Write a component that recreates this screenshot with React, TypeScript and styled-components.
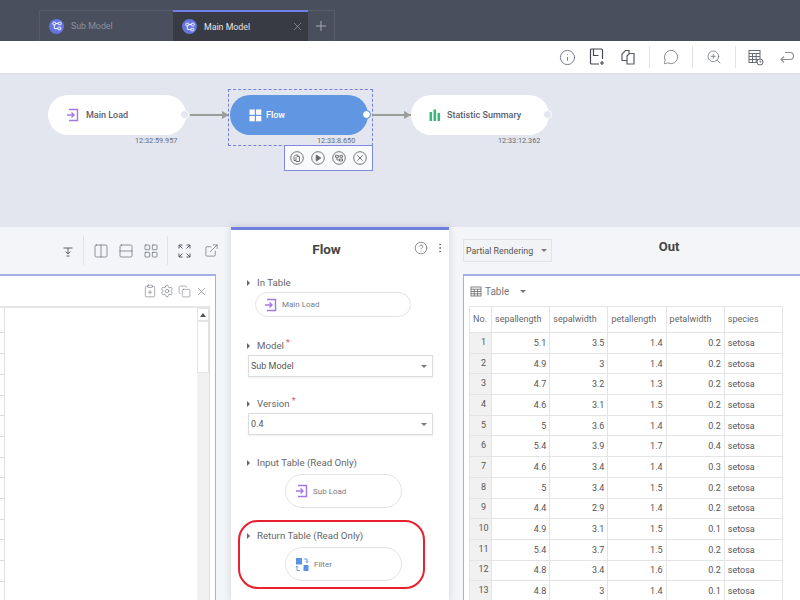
import React from "react";
import styled, { createGlobalStyle } from "styled-components";
import {
  Info,
  MessageCircle,
  ZoomIn,
  Columns2,
  Rows2,
  LayoutGrid,
  ExternalLink,
  ClipboardPlus,
  Settings,
  Copy,
  X,
  CircleHelp,
  EllipsisVertical,
  Plus,
} from "lucide-react";

const GlobalStyle = createGlobalStyle`
  html, body { margin: 0; padding: 0; background: #fff; }
  body { font-family: Roboto, "Liberation Sans", sans-serif; color: #555; }
  * { box-sizing: border-box; }
`;

const Page = styled.div`
  width: 800px;
  height: 600px;
  overflow: hidden;
  display: flex;
  flex-direction: column;
`;

/* top tabs */
const TabBar = styled.div`
  height: 41px;
  flex: none;
  background: #4a4f5e;
  padding: 10px 0 0 39px;
  display: flex;
`;

const Tab = styled.div<{ $active?: boolean }>`
  width: ${(p) => (p.$active ? 135 : 134)}px;
  display: flex;
  align-items: center;
  gap: 7px;
  padding-left: 9px;
  font-size: 8.8px;
  color: ${(p) => (p.$active ? "#e4e5ea" : "#8b8f9a")};
  background: ${(p) => (p.$active ? "#383a44" : "transparent")};
  border-top: ${(p) => (p.$active ? "2px solid #6f80e6" : "1px solid #565b69")};
  border-left: ${(p) => (p.$active ? "none" : "1px solid #565b69")};
`;

const TabBadge = styled.span`
  width: 15px;
  height: 15px;
  border-radius: 50%;
  background: #6474e0;
  display: flex;
  align-items: center;
  justify-content: center;
  flex: none;
`;

const TabClose = styled.span`
  margin-left: auto;
  margin-right: 4px;
  display: flex;
  color: #a9abb3;
`;

const AddTab = styled.div`
  width: 27px;
  display: flex;
  align-items: center;
  justify-content: center;
  color: #b4b7c0;
  border-top: 1px solid #565b69;
  border-right: 1px solid #565b69;
`;

/* main toolbar */
const ToolBar = styled.div`
  height: 33px;
  flex: none;
  background: #fff;
  border-bottom: 1px solid #dcdde2;
  display: flex;
  align-items: center;
  justify-content: flex-end;
  padding-right: 3px;
  color: #555a66;
`;

const ToolBtn = styled.span<{ $w?: number }>`
  width: ${(p) => p.$w ?? 31}px;
  display: flex;
  justify-content: center;
  align-items: center;
`;

const VLine = styled.span<{ $h?: number }>`
  width: 1px;
  height: ${(p) => p.$h ?? 22}px;
  background: #e2e3e8;
  flex: none;
`;

/* flow canvas */
const Canvas = styled.div`
  height: 153px;
  flex: none;
  background: #e3e6ef;
  position: relative;
`;

const Node = styled.div<{ $x: number; $active?: boolean }>`
  position: absolute;
  left: ${(p) => p.$x}px;
  top: 21px;
  width: 138px;
  height: 40px;
  border-radius: 20px;
  background: ${(p) => (p.$active ? "#6096e2" : "#fff")};
  color: ${(p) => (p.$active ? "#fff" : "#5a6070")};
  font-size: 9px;
  font-weight: 500;
  display: flex;
  align-items: center;
  gap: ${(p) => (p.$active ? 4 : 6)}px;
  padding-left: ${(p) => (p.$active ? 19 : 18)}px;
`;

const Port = styled.span<{ $active?: boolean }>`
  position: absolute;
  right: -3px;
  top: 15px;
  width: 9px;
  height: 9px;
  border-radius: 50%;
  background: ${(p) => (p.$active ? "#fff" : "#e3e6ef")};
  border: 1px solid ${(p) => (p.$active ? "#4f86d6" : "#fff")};
`;

const Stamp = styled.span<{ $x: number }>`
  position: absolute;
  left: ${(p) => p.$x}px;
  top: 62px;
  font-size: 7.3px;
  color: #666b76;
`;

const Link = styled.div<{ $x: number; $w: number }>`
  position: absolute;
  left: ${(p) => p.$x}px;
  top: 40px;
  width: ${(p) => p.$w}px;
  height: 2px;
  background: #9a9d9c;
  &::after {
    content: "";
    position: absolute;
    right: 0;
    top: -3px;
    border-left: 7px solid #9a9d9c;
    border-top: 4px solid transparent;
    border-bottom: 4px solid transparent;
  }
`;

const Selection = styled.div`
  position: absolute;
  left: 228px;
  top: 15px;
  width: 145px;
  height: 57px;
  border: 1px dashed #7680e0;
`;

const NodeActions = styled.div`
  position: absolute;
  left: 284px;
  top: 71px;
  width: 89px;
  height: 26px;
  background: #f9fafc;
  border: 1px solid #7f88e2;
  display: flex;
  align-items: center;
  justify-content: space-around;
  padding: 0 2px;
  color: #666;
`;

/* lower area */
const Lower = styled.div`
  flex: 1;
  min-height: 0;
  display: flex;
  background: #f4f5f8;
`;

const LeftPane = styled.div`
  width: 231px;
  flex: none;
  display: flex;
  flex-direction: column;
  padding-right: 15px;
`;

const PaneTools = styled.div`
  height: 47px;
  flex: none;
  display: flex;
  align-items: center;
  justify-content: flex-end;
  margin-right: -5px;
  color: #5c606b;
`;

const LeftCard = styled.div`
  flex: 1;
  background: #fff;
  border-top: 2px solid #a7ade9;
  border-right: 1px solid #a7ade9;
  display: flex;
  flex-direction: column;
  padding-right: 5px;
`;

const CardTools = styled.div`
  height: 30px;
  flex: none;
  display: flex;
  align-items: center;
  justify-content: flex-end;
  color: #6a6e78;
`;

const Grid = styled.div`
  flex: 1;
  display: flex;
  border-top: 2px solid #e6e6e6;
  border-right: 1px solid #dcdcdc;
`;

const RowHeads = styled.div`
  width: 5px;
  flex: none;
  border-right: 1px solid #e0e0e0;
`;

const RowHead = styled.div<{ $h: number }>`
  height: ${(p) => p.$h}px;
  border-bottom: 1px solid #dcdcdc;
`;

const GridBody = styled.div`
  flex: 1;
`;

const ScrollTrack = styled.div`
  width: 12px;
  flex: none;
  background: #f1f1f1;
  display: flex;
  flex-direction: column;
`;

const ScrollUp = styled.div`
  height: 13px;
  background: #fff;
  border: 1px solid #e4e4e4;
  display: flex;
  align-items: center;
  justify-content: center;
  &::before {
    content: "";
    border-bottom: 4px solid #555;
    border-left: 3px solid transparent;
    border-right: 3px solid transparent;
  }
`;

const ScrollThumb = styled.div`
  height: 52px;
  background: #fff;
  border: 1px solid #e4e4e4;
`;

/* settings column */
const FlowPane = styled.div`
  width: 218px;
  flex: none;
  background: #fff;
  border-top: 3px solid #6f7fdc;
  box-shadow: 0 0 7px rgba(120, 125, 145, 0.3);
  padding: 0 16px 0 17px;
  display: flex;
  flex-direction: column;
  position: relative;
`;

const PaneTitle = styled.div`
  height: 38px;
  flex: none;
  display: flex;
  align-items: center;
  justify-content: center;
  padding-right: 28px;
  font-size: 13.5px;
  font-weight: 700;
  color: #444;
  position: relative;
`;

const TitleIcons = styled.span`
  position: absolute;
  right: -13px;
  top: 11px;
  display: flex;
  gap: 6px;
  align-items: center;
  color: #555;
`;

const Label = styled.div<{ $top?: number }>`
  display: flex;
  align-items: center;
  font-size: 9.7px;
  color: #666;
  height: 14px;
  margin-top: ${(p) => p.$top ?? 0}px;
  &::before {
    content: "";
    margin: 1px 7px 0 -1px;
    border-left: 3px solid #666;
    border-top: 3px solid transparent;
    border-bottom: 3px solid transparent;
  }
`;

const Star = styled.span`
  color: #e9565c;
  font-size: 9px;
  margin: -5px 0 0 2px;
`;

const Pill = styled.div<{ $wide?: boolean }>`
  height: ${(p) => (p.$wide ? 25 : 34)}px;
  width: ${(p) => (p.$wide ? 156 : 117)}px;
  margin-left: ${(p) => (p.$wide ? 7 : 37)}px;
  margin-top: ${(p) => (p.$wide ? 3 : 5)}px;
  border: 1px solid #e3e3e3;
  border-radius: 17px;
  background: #fff;
  display: flex;
  align-items: center;
  gap: 4px;
  padding-left: ${(p) => (p.$wide ? 8 : 9)}px;
  font-size: 8px;
  color: #777b85;
`;

const Select = styled.div`
  height: 22px;
  margin-top: 3px;
  border: 1px solid #dcdcdc;
  box-shadow: 0 1px 2px rgba(0, 0, 0, 0.06);
  display: flex;
  align-items: center;
  justify-content: space-between;
  padding: 0 5px 0 2px;
  font-size: 9px;
  color: #555;
`;

const Caret = styled.span<{ $gap?: number }>`
  margin-left: ${(p) => p.$gap ?? 0}px;
  border-top: 3px solid #777;
  border-left: 3px solid transparent;
  border-right: 3px solid transparent;
`;

const ReturnBox = styled.div`
  margin: 12px 0 0 -10px;
  width: 187px;
  height: 69px;
  border: 2px solid #e8202f;
  border-radius: 20px;
  padding: 6px 0 0 8px;
`;

/* output */
const OutPane = styled.div`
  flex: 1;
  min-width: 0;
  padding: 12px 0 0 14px;
  display: flex;
  flex-direction: column;
`;

const OutHead = styled.div`
  height: 35px;
  flex: none;
  display: flex;
  align-items: flex-start;
  position: relative;
`;

const RenderSelect = styled.div`
  width: 89px;
  height: 23px;
  background: #f2f3f5;
  border: 1px solid #e2e3e6;
  display: flex;
  align-items: center;
  justify-content: space-between;
  padding: 0 4px 0 2px;
  font-size: 8.8px;
  white-space: nowrap;
  color: #555;
`;

const OutTitle = styled.div`
  flex: 1;
  text-align: center;
  font-size: 13px;
  font-weight: 700;
  color: #444;
  padding: 0 14px 0 0;
`;

const OutCard = styled.div`
  flex: 1;
  background: #fff;
  border-top: 2px solid #a7ade9;
  border-left: 1px solid #a7ade9;
  padding-left: 5px;
  display: flex;
  flex-direction: column;
`;

const TableBar = styled.div`
  height: 30px;
  flex: none;
  display: flex;
  align-items: center;
  gap: 3px;
  font-size: 10px;
  color: #777;
  padding-left: 1px;
`;

const DataTable = styled.table`
  border-collapse: collapse;
  table-layout: fixed;
  width: 314px;
  font-size: 9px;
  color: #555;
`;

const Th = styled.th<{ $w: number }>`
  width: ${(p) => p.$w}px;
  height: 26px;
  border: 1px solid #e4e4e4;
  font-weight: 400;
  text-align: left;
  padding: 0 3px 1px;
  color: #666;
`;

const NumHead = styled.td`
  height: 20.7px;
  background: #f1f1f1;
  border: 1px solid #e4e4e4;
  text-align: center;
  padding: 0 0 2px 6px;
`;

const Td = styled.td<{ $left?: boolean }>`
  height: 20.7px;
  border: 1px solid #e4e4e4;
  padding: 0 3px;
  text-align: ${(p) => (p.$left ? "left" : "right")};
`;

function ModelIcon({ size = 11, color = "#fff" }: { size?: number; color?: string }) {
  return (
    <svg width={size} height={size} viewBox="0 0 12 12" fill="none" stroke={color} strokeWidth="1.1">
      <rect x="1" y="1.5" width="3.6" height="3" rx="0.8" />
      <rect x="7.4" y="1.5" width="3.6" height="3" rx="0.8" />
      <rect x="7" y="7.5" width="3.6" height="3" rx="0.8" />
      <path d="M4.6 3h2.8M2.8 4.5V9H7" />
    </svg>
  );
}

function LoadIcon() {
  return (
    <svg width="14" height="14" viewBox="0 0 14 14" fill="none" stroke="#a178e6" strokeWidth="1.4">
      <path d="M3 1.5h8.5v11H3" />
      <path d="M1 7h7M5.5 4.5 8 7 5.5 9.5" />
    </svg>
  );
}

function SaveIcon() {
  return (
    <svg width="16" height="18" viewBox="0 0 16 18" fill="none" stroke="#444952" strokeWidth="1.2">
      <path d="M10 16H2.5a1 1 0 0 1-1-1V2a1 1 0 0 1 1-1h10a1 1 0 0 1 1 1v9" />
      <path d="M4.5 1v6.5h5" />
      <path d="M13 13v4M11 15h4" />
    </svg>
  );
}

function PagesIcon({ size = 16 }: { size?: number }) {
  return (
    <svg width={size} height={size} viewBox="0 0 16 16" fill="none" stroke="currentColor" strokeWidth="1.2">
      <path d="M7 11.5H2V5l3.5-3.5H9v3" />
      <path d="M7 7l2.5-2.5H14V15H7z" />
    </svg>
  );
}

function CalendarClock() {
  return (
    <svg width="16" height="17" viewBox="0 0 16 17" fill="none" stroke="#666b76" strokeWidth="1">
      <rect x="1" y="1.5" width="11" height="12" />
      <path d="M1 4.5h11M1 7.5h11M1 10.5h11M4.5 4.5v9M8.2 4.5v9" />
      <circle cx="12" cy="13" r="3" fill="#fff" />
      <path d="M12 11.5V13h1.3" />
    </svg>
  );
}

function UndoArrow() {
  return (
    <svg width="15" height="13" viewBox="0 0 15 13" fill="none" stroke="#8a8e98" strokeWidth="1.1">
      <path d="M6 1.5h5a3.5 3.5 0 0 1 0 7H2M5 5.5l-3 3 3 3" />
    </svg>
  );
}

function DownloadMark() {
  return (
    <svg width="12" height="12" viewBox="0 0 12 12" fill="none" stroke="#555" strokeWidth="0.9">
      <path d="M1.5 3h9M6 3v6M3.5 6.5 6 9l2.5-2.5M4.5 11h3" />
    </svg>
  );
}

function ExpandMark() {
  return (
    <svg width="13" height="14" viewBox="0 0 13 14" fill="none" stroke="#555a66" strokeWidth="1">
      <path d="M1 4.5V1h3.5M12 4.5V1H8.5M1 9.5V13h3.5M12 9.5V13H8.5M1 1l3.5 3.5M12 1 8.5 4.5M1 13l3.5-3.5M12 13 8.5 9.5" />
    </svg>
  );
}

function CircleAction({ children }: { children: React.ReactNode }) {
  return (
    <svg width="14" height="14" viewBox="0 0 14 14" fill="none" stroke="#666" strokeWidth="0.9">
      <circle cx="7" cy="7" r="6.3" />
      {children}
    </svg>
  );
}

function GridTiles() {
  return (
    <svg width="13" height="13" viewBox="0 0 13 13" fill="#fff">
      <rect x="0.5" y="0.5" width="5.3" height="5.3" />
      <rect x="7" y="0.5" width="5.3" height="5.3" />
      <rect x="0.5" y="7" width="5.3" height="5.3" />
      <rect x="7" y="7" width="5.3" height="5.3" />
    </svg>
  );
}

function BarsIcon() {
  return (
    <svg width="12" height="12" viewBox="0 0 12 12" fill="#3cb878">
      <rect x="0.5" y="3" width="2.6" height="9" />
      <rect x="4.5" y="0.5" width="2.6" height="11.5" />
      <rect x="8.5" y="4" width="2.6" height="8" />
    </svg>
  );
}

function FilterIcon() {
  return (
    <svg width="15" height="15" viewBox="0 0 15 15" fill="none">
      <rect x="1" y="1" width="6" height="6.5" fill="#5b93e2" />
      <rect x="8.5" y="8" width="5" height="6" fill="#5b93e2" />
      <path d="M9 2h3v3.5M10.8 4.4 12 5.8l1.2-1.4M2 9.5v4h3M3.2 10.4 2 9l-1.2 1.4" stroke="#5b93e2" strokeWidth="0.9" />
    </svg>
  );
}

function TableGlyph() {
  return (
    <svg width="12" height="11" viewBox="0 0 12 11" fill="none" stroke="#777" strokeWidth="0.9">
      <rect x="1" y="1" width="10" height="9" />
      <path d="M1 3.2h10M1 5.5h10M1 7.8h10M4.3 3.2V10M7.6 3.2V10" />
    </svg>
  );
}

const irisRows = [
  [5.1, 3.5, 1.4, 0.2],
  [4.9, 3, 1.4, 0.2],
  [4.7, 3.2, 1.3, 0.2],
  [4.6, 3.1, 1.5, 0.2],
  [5, 3.6, 1.4, 0.2],
  [5.4, 3.9, 1.7, 0.4],
  [4.6, 3.4, 1.4, 0.3],
  [5, 3.4, 1.5, 0.2],
  [4.4, 2.9, 1.4, 0.2],
  [4.9, 3.1, 1.5, 0.1],
  [5.4, 3.7, 1.5, 0.2],
  [4.8, 3.4, 1.6, 0.2],
  [4.8, 3, 1.4, 0.1],
];

const columns = ["sepallength", "sepalwidth", "petallength", "petalwidth", "species"];

const leftRowHeights = [25, 21, 21, 21, 20, 21, 21, 20, 21, 21, 20, 21, 21, 21];

export default function App() {
  return (
    <Page>
      <GlobalStyle />
      <TabBar>
        <Tab>
          <TabBadge>
            <ModelIcon size={10} />
          </TabBadge>
          Sub Model
        </Tab>
        <Tab $active>
          <TabBadge>
            <ModelIcon size={10} />
          </TabBadge>
          Main Model
          <TabClose>
            <X size={13} strokeWidth={1.1} />
          </TabClose>
        </Tab>
        <AddTab>
          <Plus size={16} strokeWidth={1.3} />
        </AddTab>
      </TabBar>

      <ToolBar>
        <ToolBtn $w={40}><Info size={17} strokeWidth={1.1} /></ToolBtn>
        <ToolBtn $w={20}><SaveIcon /></ToolBtn>
        <ToolBtn $w={42}><PagesIcon /></ToolBtn>
        <VLine />
        <ToolBtn $w={42}><MessageCircle size={16} strokeWidth={1} /></ToolBtn>
        <VLine />
        <ToolBtn $w={42}><ZoomIn size={16} strokeWidth={1} /></ToolBtn>
        <VLine />
        <ToolBtn $w={39}><CalendarClock /></ToolBtn>
        <ToolBtn $w={22}><UndoArrow /></ToolBtn>
      </ToolBar>

      <Canvas>
        <Node $x={48}>
          <LoadIcon />
          Main Load
          <Port />
        </Node>
        <Stamp $x={135}>12:32:59.957</Stamp>
        <Link $x={190} $w={39} />
        <Selection />
        <Node $x={230} $active>
          <GridTiles />
          Flow
          <Port $active />
        </Node>
        <Stamp $x={317}>12:33:8.650</Stamp>
        <Link $x={372} $w={39} />
        <Node $x={411}>
          <BarsIcon />
          Statistic Summary
          <Port />
        </Node>
        <Stamp $x={498}>12:33:12.362</Stamp>
        <NodeActions>
          <CircleAction>
            <path d="M6 9.5H4V5.5L5.5 4H8v1.5M6 6.5l1-1h2.5V10.5H6z" />
          </CircleAction>
          <CircleAction>
            <path d="M5.2 4v6L9.8 7z" fill="#666" />
          </CircleAction>
          <CircleAction>
            <path d="M3.5 4.3h3v2h-3zM8 4.3h2.5v2H8zM7.5 8h3v2h-3zM5 6.3V9h2.5" />
          </CircleAction>
          <CircleAction>
            <path d="M4.3 4.3l5.4 5.4M9.7 4.3l-5.4 5.4" />
          </CircleAction>
        </NodeActions>
      </Canvas>

      <Lower>
        <LeftPane>
          <PaneTools>
            <ToolBtn $w={20}><DownloadMark /></ToolBtn>
            <ToolBtn $w={5} />
            <VLine $h={29} />
            <ToolBtn $w={33}><Columns2 size={16} strokeWidth={1} /></ToolBtn>
            <ToolBtn $w={17}><Rows2 size={16} strokeWidth={1} /></ToolBtn>
            <ToolBtn $w={33}><LayoutGrid size={16} strokeWidth={1} /></ToolBtn>
            <VLine $h={29} />
            <ToolBtn $w={33}><ExpandMark /></ToolBtn>
            <ToolBtn $w={20}><ExternalLink size={15} strokeWidth={1} /></ToolBtn>
          </PaneTools>
          <LeftCard>
            <CardTools>
              <ToolBtn $w={17}><ClipboardPlus size={14} strokeWidth={1} /></ToolBtn>
              <ToolBtn $w={17}><Settings size={14} strokeWidth={1} /></ToolBtn>
              <ToolBtn $w={18}><Copy size={13} strokeWidth={1} /></ToolBtn>
              <ToolBtn $w={17}><X size={13} strokeWidth={1} /></ToolBtn>
            </CardTools>
            <Grid>
              <RowHeads>
                {leftRowHeights.map((h, i) => (
                  <RowHead key={i} $h={h} />
                ))}
              </RowHeads>
              <GridBody />
              <ScrollTrack>
                <ScrollUp />
                <ScrollThumb />
              </ScrollTrack>
            </Grid>
          </LeftCard>
        </LeftPane>

        <FlowPane>
          <PaneTitle>
            Flow
            <TitleIcons>
              <CircleHelp size={14} strokeWidth={1.1} />
              <EllipsisVertical size={12} strokeWidth={1.5} />
            </TitleIcons>
          </PaneTitle>
          <Label $top={7}>In Table</Label>
          <Pill $wide>
            <LoadIcon />
            Main Load
          </Pill>
          <Label $top={21}>
            Model<Star>*</Star>
          </Label>
          <Select>
            Sub Model
            <Caret />
          </Select>
          <Label $top={19}>
            Version<Star>*</Star>
          </Label>
          <Select>
            0.4
            <Caret />
          </Select>
          <Label $top={20}>Input Table (Read Only)</Label>
          <Pill>
            <LoadIcon />
            Sub Load
          </Pill>
          <ReturnBox>
            <Label>Return Table (Read Only)</Label>
            <Pill>
              <FilterIcon />
              Filter
            </Pill>
          </ReturnBox>
        </FlowPane>

        <OutPane>
          <OutHead>
            <RenderSelect>
              Partial Rendering
              <Caret />
            </RenderSelect>
            <OutTitle>Out</OutTitle>
          </OutHead>
          <OutCard>
            <TableBar>
              <TableGlyph />
              Table
              <Caret $gap={8} />
            </TableBar>
            <DataTable>
              <thead>
                <tr>
                  <Th $w={22}>No.</Th>
                  {columns.map((c) => (
                    <Th key={c} $w={58}>{c}</Th>
                  ))}
                </tr>
              </thead>
              <tbody>
                {irisRows.map((row, i) => (
                  <tr key={i}>
                    <NumHead>{i + 1}</NumHead>
                    {row.map((v, j) => (
                      <Td key={j}>{v}</Td>
                    ))}
                    <Td $left>setosa</Td>
                  </tr>
                ))}
              </tbody>
            </DataTable>
          </OutCard>
        </OutPane>
      </Lower>
    </Page>
  );
}
